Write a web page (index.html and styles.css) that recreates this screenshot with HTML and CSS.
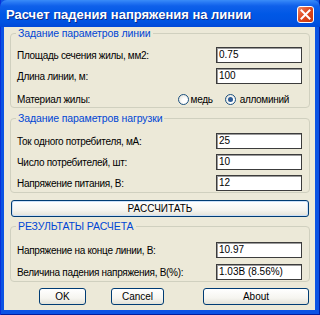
FILE: index.html
```html
<!DOCTYPE html>
<html lang="ru">
<head>
<meta charset="utf-8">
<title>Расчет падения напряжения на линии</title>
<link rel="stylesheet" href="styles.css">
</head>
<body>
<div class="window">
  <div class="titlebar">
    <span class="title">Расчет падения напряжения на линии</span>
    <span class="close">
      <svg width="11" height="11" viewBox="0 0 11 11"><path d="M1.5 1.5 L9.5 9.5 M9.5 1.5 L1.5 9.5" stroke="#fff" stroke-width="2" stroke-linecap="square"/></svg>
    </span>
  </div>
  <div class="client">
    <div class="group g1">
      <span class="legend">Задание параметров линии</span>
      <div class="row"><span class="lbl">Площадь сечения жилы, мм2:</span><span class="field">0.75</span></div>
      <div class="row"><span class="lbl">Длина линии, м:</span><span class="field">100</span></div>
      <div class="row r-radio"><span class="lbl">Материал жилы:</span>
        <span class="radios">
          <span class="radio r1"><span class="dot"></span>медь</span>
          <span class="radio r2 on"><span class="dot"></span>алломиний</span>
        </span>
      </div>
    </div>
    <div class="group g2">
      <span class="legend">Задание параметров нагрузки</span>
      <div class="row"><span class="lbl">Ток одного потребителя, мА:</span><span class="field">25</span></div>
      <div class="row"><span class="lbl">Число потребителей, шт:</span><span class="field">10</span></div>
      <div class="row"><span class="lbl">Напряжение питания, В:</span><span class="field">12</span></div>
    </div>
    <div class="btn calc">РАССЧИТАТЬ</div>
    <div class="group g3">
      <span class="legend">РЕЗУЛЬТАТЫ РАСЧЕТА</span>
      <div class="row"><span class="lbl">Напряжение на конце линии, В:</span><span class="field">10.97</span></div>
      <div class="row"><span class="lbl">Величина падения напряжения, В(%):</span><span class="field">1.03В (8.56%)</span></div>
    </div>
    <div class="buttons">
      <div class="btn ok">OK</div>
      <div class="btn cancel">Cancel</div>
      <div class="btn about">About</div>
    </div>
  </div>
</div>
</body>
</html>
```
FILE: styles.css
```css
html, body {
  margin: 0;
  padding: 0;
  background: #ffffff;
}
.window {
  width: 320px;
  height: 315px;
  box-sizing: border-box;
  display: flex;
  flex-direction: column;
  background: #0B53E4;
  box-shadow: inset 1px 0 #0831D9, inset -1px 0 #001EA0, inset 0 -1px #001EA0;
  font-family: "Liberation Sans", Arial, sans-serif;
  font-size: 10px;
  color: #000;
}
.titlebar {
  height: 27px;
  flex: none;
  display: flex;
  align-items: center;
  justify-content: space-between;
  padding: 0 6px 0 6px;
  border-radius: 7px 7px 0 0;
  background: linear-gradient(#3A8CF8 0px, #2374F2 3px, #0F60EA 6px, #0058E6 14px, #0053E2 22px, #0049D8 27px);
}
.title {
  color: #fff;
  font-weight: bold;
  font-size: 13px;
  text-shadow: 1px 1px #0A2A8A;
  padding-top: 1px;
}
.close {
  width: 15px;
  height: 15px;
  margin-top: 1px;
  border: 1px solid #fff;
  border-radius: 3px;
  background: linear-gradient(135deg, #F08A6A, #E04A20 45%, #C8360E);
  display: flex;
  align-items: center;
  justify-content: center;
}
.client {
  flex: 1;
  margin: 0 5px 5px 4px;
  background: #ECE9D8;
  padding: 6px 5px 0 6px;
  display: flex;
  flex-direction: column;
}
.group {
  position: relative;
  border: 1px solid #D0D0BF;
  border-radius: 4px;
  padding: 13px 7px 0 6px;
  display: flex;
  flex-direction: column;
  gap: 5px;
}
.legend {
  position: absolute;
  top: -7px;
  left: 5px;
  padding: 0 2px;
  background: #ECE9D8;
  color: #0046D5;
  font-size: 10.5px;
  line-height: 13px;
  letter-spacing: -0.1px;
}
.row {
  height: 16px;
  display: flex;
  align-items: center;
  justify-content: space-between;
}
.lbl {
  letter-spacing: -0.3px;
}
.field {
  width: 86px;
  height: 16px;
  box-sizing: border-box;
  background: #fff;
  border: 1px solid #3C3C3C;
  box-shadow: inset 1px 1px #9A9A9A;
  padding: 0 0 0 2px;
  line-height: 14px;
}
.g1 .r-radio {
  margin-top: 2px;
}
.radios {
  display: flex;
  margin-right: 13px;
  letter-spacing: -0.3px;
}
.radio {
  display: flex;
  align-items: center;
}
.r1 {
  gap: 2px;
}
.r2 {
  gap: 4px;
  margin-left: 12px;
}
.dot {
  width: 11px;
  height: 11px;
  box-sizing: border-box;
  border: 1px solid #1C5180;
  border-radius: 50%;
  background: radial-gradient(circle at 65% 65%, #ffffff 30%, #DCDBD0 100%);
  position: relative;
}
.radio.on .dot::after {
  content: "";
  position: absolute;
  left: 2px;
  top: 2px;
  width: 5px;
  height: 5px;
  border-radius: 50%;
  background: #2D5C98;
}
.g2 {
  margin-top: 10px;
  padding-top: 14px;
  padding-bottom: 1px;
}
.g3 {
  margin-top: 9px;
  padding-top: 15px;
  padding-bottom: 1px;
  gap: 6px;
}
.btn {
  box-sizing: border-box;
  height: 17px;
  border: 1px solid #003C74;
  border-radius: 3px;
  background: linear-gradient(#FFFFFF, #F6F5F0 60%, #E3E2D8);
  display: flex;
  align-items: center;
  justify-content: center;
  color: #000;
}
.calc {
  margin: 7px 1px 0 1px;
  box-shadow: inset 0 0 0 1px #CCE0F8;
}
.buttons {
  margin-top: 6px;
  display: flex;
  padding-left: 29px;
}
.ok {
  width: 47px;
}
.cancel {
  width: 53px;
  margin-left: 25px;
}
.about {
  width: 106px;
  margin-left: 39px;
}
```
